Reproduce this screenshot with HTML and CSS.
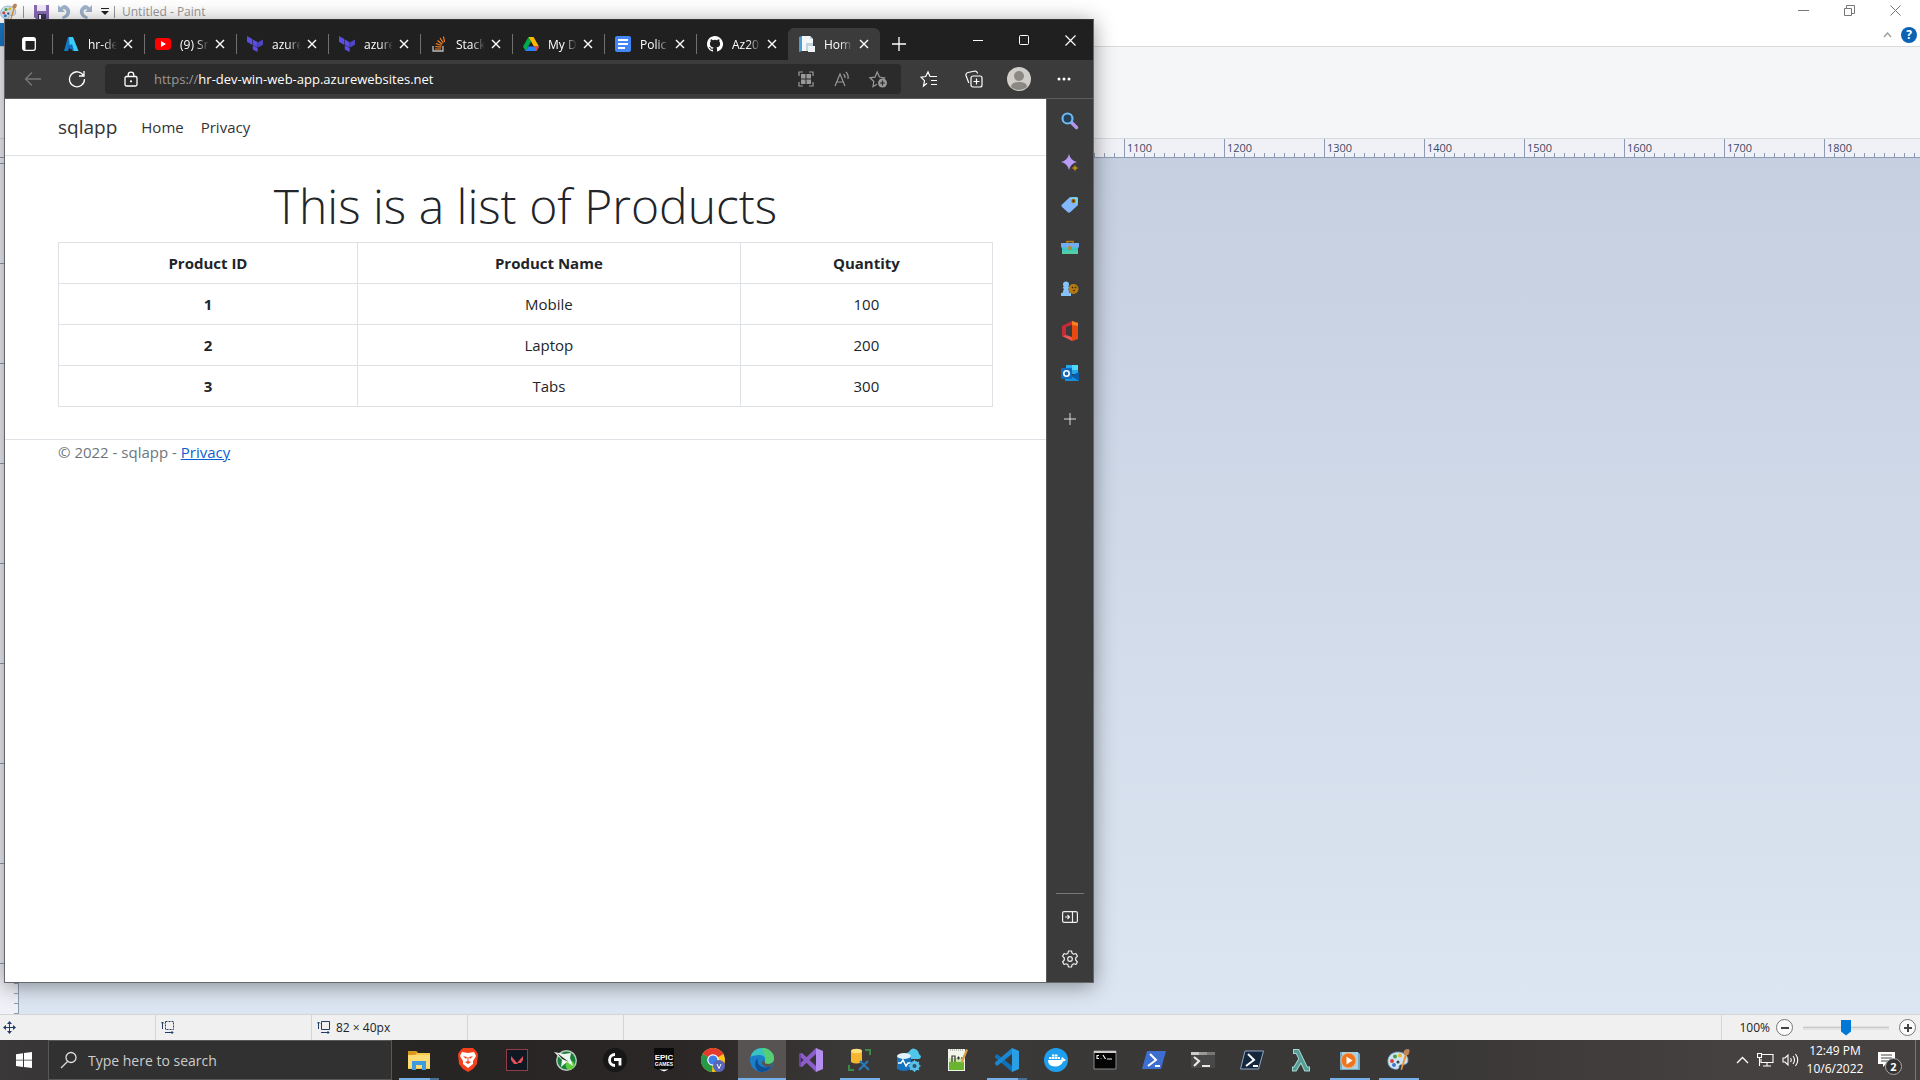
FILE: index.html
```html
<!DOCTYPE html>
<html lang="en">
<head>
<meta charset="utf-8">
<title>Desktop</title>
<link rel="stylesheet" href="styles.css">
</head>
<body>
<svg class="defs" aria-hidden="true">
  <symbol id="x" viewBox="0 0 10 10"><path d="M1 1l8 8M9 1L1 9" stroke="currentColor" stroke-width="1.4" fill="none"/></symbol>
  <symbol id="terraform" viewBox="0 0 18 18"><path d="M0 0l6 3.500v6.500L0 6.500z" fill="#5c4ee5"/><path d="M6.500 3.800l5.500 3.200v6l-5.500-3.200zM6.500 10.500l5.500 3V18l-5.500-2.700z" fill="#5c4ee5"/><path d="M18 3.800l-5.500 3.200v6l5.500-3.200z" fill="#4f46c4"/></symbol>
  <symbol id="palette" viewBox="0 0 24 24"><path d="M11 4C4 4 0 9 1 15c1 5 6 7 10 6 2-1 0-3 2-4s8 1 8-5c0-5-5-8-10-8z" fill="#cfe4f2" stroke="#6d9cba" stroke-width=".8"/><circle cx="5" cy="13" r="2" fill="#d9453b"/><circle cx="8" cy="8.500" r="2" fill="#46a04a"/><circle cx="13" cy="7.500" r="2" fill="#e9b52d"/><circle cx="7" cy="17" r="2" fill="#3f78d1"/><circle cx="11" cy="14" r="1.500" fill="#36454f"/><path d="M20 7l-5 15-1.500-.5L18 6z" fill="#e8923a"/><path d="M17 7c-1-3 0-6 4-6 2 0 2 3 0 6z" fill="#c08457"/></symbol>
</svg>

<section class="paint">
  <header class="paint-title">
    <div class="quick">
      <svg width="18" height="18"><use href="#palette"/></svg>
      <i class="bar"></i>
      <svg width="15" height="15" viewBox="0 0 15 15"><path d="M0 1h15v14H2l-2-2z" fill="#8a6bb5"/><path d="M3 1h9v6H3z" fill="#f0ecf8"/><path d="M4 10h8v5H4z" fill="#3e3357"/><path d="M5 11h2v4H5z" fill="#fff"/></svg>
      <svg width="14" height="16" viewBox="0 0 14 16"><path d="M1 1v7h7L5.500 5.500C9 4 11 8 8 11l-3 2 1 2c6-1 9-7 6-11S6 0 3.500 3.500z" fill="#9fb3cc"/></svg>
      <svg width="14" height="16" viewBox="0 0 14 16"><path d="M13 1v7H6l2.500-2.500C5 4 3 8 6 11l3 2-1 2C2 14-1 8 2 4s6-4 8.500-.5z" fill="#9fb3cc"/></svg>
      <svg width="8" height="8" viewBox="0 0 8 8"><path d="M0 0h8v1H0zM0 3h8L4 7z" fill="#222"/></svg>
      <i class="bar"></i>
      <span>Untitled - Paint</span>
    </div>
    <div class="paint-buttons">
      <button aria-label="Minimize"><svg width="11" height="11"><path d="M0 5.500h11" stroke="#777"/></svg></button>
      <button aria-label="Restore"><svg width="11" height="11" fill="none" stroke="#777"><path d="M.5 3.500h7v7h-7zM2.500 3V.500h8v8H8"/></svg></button>
      <button aria-label="Close"><svg width="11" height="11"><path d="M.5.500l10 10M10.500.500l-10 10" stroke="#777"/></svg></button>
    </div>
  </header>
  <div class="paint-tabs">
    <button class="file" aria-label="File"></button>
    <div class="help">
      <svg width="9" height="6" viewBox="0 0 9 6"><path d="M1 5l3.500-4L8 5" fill="none" stroke="#999" stroke-width="1.300"/></svg>
      <button class="question">?</button>
    </div>
  </div>
  <div class="ribbon"></div>
  <div class="ruler-x"><div class="marks"><span class="first">1100</span><span>1200</span><span>1300</span><span>1400</span><span>1500</span><span>1600</span><span>1700</span><span>1800</span></div></div>
  <div class="work"><div class="ruler-y"><i></i></div></div>
  <footer class="status">
    <div class="cell"><svg width="13" height="13" viewBox="0 0 13 13" fill="#233f68"><path d="M6 1h1v11H6zM1 6h11v1H1zM6.500 0L9 3H4zM6.500 13L4 10h5zM0 6.500L3 4v5zM13 6.500L10 9V4z"/></svg></div>
    <div class="cell"><svg width="14" height="13" viewBox="0 0 14 13" fill="none" stroke="#233f68"><path d="M1.500 1v7M0 2.500L1.500 1 3 2.500M4 11.500h8M10.500 10l1.500 1.500-1.500 1.500"/><path d="M4.500.500h8v8h-8z" stroke-dasharray="2 1"/></svg></div>
    <div class="cell"><svg width="14" height="13" viewBox="0 0 14 13" fill="none" stroke="#233f68"><path d="M1.500 1v7M0 2.500L1.500 1 3 2.500M4 11.500h8M10.500 10l1.500 1.500-1.500 1.500M4.500.500h8v8h-8z"/></svg><span>82 × 40px</span></div>
    <div class="cell"></div>
    <div class="cell rest"></div>
    <div class="zoom">
      <label for="zoom">100%</label>
      <button class="round" aria-label="Zoom out"><svg width="10" height="10"><path d="M1 5h8" stroke="#444" stroke-width="2"/></svg></button>
      <input id="zoom" type="range" min="0" max="100" value="50">
      <button class="round" aria-label="Zoom in"><svg width="10" height="10"><path d="M1 5h8M5 1v8" stroke="#444" stroke-width="2"/></svg></button>
    </div>
  </footer>
</section>

<section class="browser">
  <header class="tabstrip">
    <button class="tabmenu" aria-label="Tab actions"><svg width="14" height="14" viewBox="0 0 14 14"><rect x=".7" y=".7" width="12.600" height="12.600" rx="2" fill="none" stroke="#fff" stroke-width="1.300"/><path d="M1 1h12v3H1zM1 4h2.500v9H1z" fill="#fff"/></svg></button>
    <div class="tab"><svg width="16" height="16" viewBox="0 0 16 16"><path d="M5 1h5L5 15H1z" fill="#1479c4"/><path d="M6 1h4l5.500 14H10L6.500 8z" fill="#3ccbf4"/><path d="M4 11l5-3 2 7z" fill="#0f6cbd"/></svg><span>hr-de</span><button aria-label="Close tab"><svg width="10" height="10"><use href="#x"/></svg></button></div>
    <div class="tab"><svg width="16" height="12" viewBox="0 0 16 12"><rect width="16" height="12" rx="3" fill="#f00"/><path d="M6 3l5 3-5 3z" fill="#fff"/></svg><span>(9) Sn</span><button aria-label="Close tab"><svg width="10" height="10"><use href="#x"/></svg></button></div>
    <div class="tab"><svg width="16" height="16"><use href="#terraform"/></svg><span>azure</span><button aria-label="Close tab"><svg width="10" height="10"><use href="#x"/></svg></button></div>
    <div class="tab"><svg width="16" height="16"><use href="#terraform"/></svg><span>azure</span><button aria-label="Close tab"><svg width="10" height="10"><use href="#x"/></svg></button></div>
    <div class="tab"><svg width="16" height="16" viewBox="0 0 16 16" fill="none"><path d="M2 10v5h10v-5" stroke="#bcbbbb" stroke-width="1.300"/><path d="M4 13h6M4.200 10.500l6 .7M4.800 7.500l5.700 2M6.500 4.500l4.700 3.700M9 2l3.300 5M12.500.500l1 5.500" stroke="#f48024" stroke-width="1.200"/></svg><span>Stack</span><button aria-label="Close tab"><svg width="10" height="10"><use href="#x"/></svg></button></div>
    <div class="tab"><svg width="16" height="16" viewBox="0 0 16 16"><path d="M5.500 1L0 10.500 2.500 15 8 5.500z" fill="#00ac47"/><path d="M5.500 1h5l5.500 9.500h-5z" fill="#ffba00"/><path d="M5.200 10.500H16L13.500 15h-11z" fill="#2684fc"/><path d="M11 10.500h5L13.500 15z" fill="#ea4335"/></svg><span>My D</span><button aria-label="Close tab"><svg width="10" height="10"><use href="#x"/></svg></button></div>
    <div class="tab"><svg width="16" height="16" viewBox="0 0 16 16"><rect width="16" height="16" rx="2" fill="#4285f4"/><path d="M3 4h10M3 8h10M3 12h7" stroke="#fff" stroke-width="1.800"/></svg><span>Polic</span><button aria-label="Close tab"><svg width="10" height="10"><use href="#x"/></svg></button></div>
    <div class="tab"><svg width="16" height="16" viewBox="0 0 16 16" fill="#fff"><path d="M8 0C3.580 0 0 3.580 0 8c0 3.540 2.290 6.530 5.470 7.590.4.070.55-.17.55-.38 0-.19-.01-.82-.01-1.490-2.010.37-2.530-.49-2.690-.94-.09-.23-.48-.94-.82-1.130-.28-.15-.68-.52-.01-.53.63-.01 1.080.58 1.230.82.72 1.210 1.870.87 2.330.66.07-.52.28-.87.51-1.070-1.780-.2-3.640-.89-3.640-3.950 0-.87.31-1.590.82-2.150-.08-.2-.36-1.020.08-2.120 0 0 .67-.21 2.200.82a7.600 7.600 0 014 0c1.530-1.040 2.200-.82 2.200-.82.44 1.100.16 1.920.08 2.120.51.56.82 1.270.82 2.150 0 3.070-1.870 3.750-3.650 3.950.29.25.54.73.54 1.480 0 1.070-.01 1.930-.01 2.200 0 .21.15.46.55.38A8 8 0 008 0z"/></svg><span>Az20</span><button aria-label="Close tab"><svg width="10" height="10"><use href="#x"/></svg></button></div>
    <div class="tab active"><svg width="16" height="16" viewBox="0 0 16 16"><path d="M0 1l3-1v15l-3 1z" fill="#4a9fd4"/><path d="M3 0h8l3 3v12H3z" fill="#f4f8fb"/><path d="M11 0l3 3h-3zM7 7h7v8H7z" fill="#c3d3df"/><path d="M9 10h7v6H9z" fill="#eef2f5"/></svg><span>Hom</span><button aria-label="Close tab"><svg width="10" height="10"><use href="#x"/></svg></button></div>
    <button class="newtab" aria-label="New tab"><svg width="14" height="14"><path d="M7 0v14M0 7h14" stroke="#fff" stroke-width="1.300"/></svg></button>
    <div class="winbuttons">
      <button aria-label="Minimize"><svg width="10" height="10"><path d="M0 5.500h10" stroke="#fff"/></svg></button>
      <button aria-label="Maximize"><svg width="10" height="10"><rect x=".5" y=".5" width="9" height="9" rx="1" fill="none" stroke="#fff"/></svg></button>
      <button aria-label="Close"><svg width="11" height="11"><path d="M.5.500l10 10M10.500.500l-10 10" stroke="#fff" stroke-width="1.200"/></svg></button>
    </div>
  </header>

  <div class="toolbar">
    <button class="nav" aria-label="Back"><svg width="18" height="16" viewBox="0 0 18 16"><path d="M17 8H1.500M8 1.500L1.500 8 8 14.500" fill="none" stroke="#777" stroke-width="1.300"/></svg></button>
    <button class="nav" aria-label="Refresh"><svg width="18" height="18" viewBox="0 0 18 18"><path d="M15.500 5.500A7.500 7.500 0 1 0 16.500 9M16 1v5h-5" fill="none" stroke="#fff" stroke-width="1.300"/></svg></button>
    <div class="address">
      <svg width="14" height="16" viewBox="0 0 14 16"><rect x="1" y="5.500" width="12" height="9.500" rx="1.500" fill="none" stroke="#fff" stroke-width="1.300"/><path d="M4.200 5.500V4a2.800 2.800 0 0 1 5.600 0v1.500" fill="none" stroke="#fff" stroke-width="1.300"/><circle cx="7" cy="10.300" r="1.100" fill="#fff"/></svg>
      <span class="url"><i>https://</i>hr-dev-win-web-app.azurewebsites.net</span>
      <button aria-label="QR code"><svg width="16" height="16" viewBox="0 0 16 16"><path d="M1 5V1h4M11 1h4v4M15 11v4h-4M5 15H1v-4" fill="none" stroke="#999" stroke-width="1.200"/><path d="M3 3h4.500v4.500H3zM8.500 3H13v4.500H8.500zM3 8.500h4.500V13H3zM8.500 8.500H13V13H8.500z" fill="#999"/></svg></button>
      <button aria-label="Read aloud"><svg width="16" height="16" viewBox="0 0 16 16" fill="none" stroke="#999" stroke-width="1.200"><path d="M1 15L6 3l5 12M3 11h6.500M9.500 3a5 5 0 0 1 1.500 4M12 1a8 8 0 0 1 2 7"/></svg></button>
      <button aria-label="Add favorite"><svg width="18" height="18" viewBox="0 0 18 18"><path d="M8 14.200L4 16.500l.8-5L1 7.800l5-.7L8.200 2l2.300 5 5 .8-1 1" fill="none" stroke="#999" stroke-width="1.200"/><circle cx="13.500" cy="13" r="4.500" fill="#999"/><path d="M13.500 10.500v5M11 13h5" stroke="#2b2b2b" stroke-width="1.200"/></svg></button>
    </div>
    <div class="tools">
      <button aria-label="Favorites"><svg width="18" height="18" viewBox="0 0 18 18" fill="none" stroke="#fff" stroke-width="1.200"><path d="M7 13.200L3.500 16l1-5.300L1 7.200l4.700-.7L8 2l2 4.500h7M11 10.500h6M11 14.500h6"/></svg></button>
      <button aria-label="Collections"><svg width="18" height="18" viewBox="0 0 18 18" fill="none" stroke="#fff" stroke-width="1.200"><rect x="6" y="6" width="11" height="11" rx="2"/><path d="M11.500 8.500v6M8.500 11.500h6M3.800 13L1 5.500Q.5 3 3 2.500L10 1q2 0 2.500 2.500"/></svg></button>
      <button aria-label="Profile"><svg width="24" height="24" viewBox="0 0 24 24"><circle cx="12" cy="12" r="12" fill="#d0cecb"/><circle cx="12" cy="9" r="5" fill="#8b8783"/><path d="M4 20q0-5 8-5t8 5a12 12 0 0 1-16 0z" fill="#8b8783"/></svg></button>
      <button aria-label="More"><svg width="14" height="4" fill="#fff"><circle cx="2" cy="2" r="1.500"/><circle cx="7" cy="2" r="1.500"/><circle cx="12" cy="2" r="1.500"/></svg></button>
    </div>
  </div>

  <div class="body">
    <div class="page">
      <nav class="navbar">
        <a class="brand" href="#">sqlapp</a>
        <a href="#">Home</a>
        <a href="#">Privacy</a>
      </nav>
      <main>
        <h1>This is a list of Products</h1>
        <table>
          <colgroup><col class="c1"><col class="c2"><col class="c3"></colgroup>
          <thead><tr><th>Product ID</th><th>Product Name</th><th>Quantity</th></tr></thead>
          <tbody>
            <tr><th>1</th><td>Mobile</td><td>100</td></tr>
            <tr><th>2</th><td>Laptop</td><td>200</td></tr>
            <tr><th>3</th><td>Tabs</td><td>300</td></tr>
          </tbody>
        </table>
      </main>
      <footer class="page-foot">© 2022 - sqlapp - <a href="#">Privacy</a></footer>
    </div>
    <aside class="side">
      <button aria-label="Search"><svg width="18" height="18" viewBox="0 0 18 18"><path d="M10.500 10.500l5 5" stroke="#b596ee" stroke-width="3.500" stroke-linecap="round"/><circle cx="6.500" cy="6.500" r="5" fill="#23405c" stroke="#6db9f2" stroke-width="2.200"/></svg></button>
      <button aria-label="Discover"><svg width="18" height="18" viewBox="0 0 18 18"><path d="M8 0q1.500 6.500 8 8-6.500 1.500-8 8-1.500-6.500-8-8 6.500-1.500 8-8z" fill="#b79bf5"/><path d="M14 10.500q.5 3 3.500 3.500-3 .5-3.500 3.500-.5-3-3.500-3.500 3-.5 3.500-3.500z" fill="#c38a12"/></svg></button>
      <button aria-label="Shopping"><svg width="18" height="18" viewBox="0 0 18 18"><path d="M1 8.500L8.500 1.500 15 1q2 0 2 2l-.5 6.500L9.500 16q-1.500 1.300-3 0L1 11q-1.200-1.300 0-2.500z" fill="#82b8fa"/><path d="M8.500 1.500L15 1q2 0 2 2l-.5 6.500z" fill="#77d5f0"/><circle cx="12.500" cy="5" r="2.200" fill="#a86e05"/><circle cx="12.500" cy="5" r="1" fill="#2c2c2c"/></svg></button>
      <button aria-label="Tools"><svg width="18" height="16" viewBox="0 0 18 16"><path d="M6 5V2.500h6V5" fill="none" stroke="#b47a12" stroke-width="1.600"/><path d="M1 6h16v8.500H1z" fill="#3bc6c4"/><path d="M0 4h18v4.500H0z" fill="#74acf0"/><path d="M1 12h16v3H1z" fill="#54cda5"/><circle cx="9" cy="9" r="2" fill="#b98d27"/></svg></button>
      <button aria-label="Games"><svg width="18" height="16" viewBox="0 0 18 16"><circle cx="12.500" cy="8" r="5" fill="#b67b13"/><path d="M11 6h1v1h-1zM14 6h1v1h-1zM12.500 9h1v1h-1z" fill="#3a2500" stroke="#3a2500" stroke-width=".5"/><circle cx="5" cy="3.500" r="3" fill="#86c3fa"/><path d="M2 6h6v1.500H7L8.500 12H10v3H0v-3h1.500L3 7.500H2z" fill="#86c3fa"/></svg></button>
      <button aria-label="Office"><svg width="18" height="20" viewBox="0 0 18 20"><path d="M11 0l6 2v16l-6 2z" fill="#e64a10"/><path d="M11 0v4L5 6v8l-4 1V5z" fill="#c92a35"/><path d="M1 15l4-1 6 2v4z" fill="#ef5350"/><path d="M11 0l6 2v3l-6-1z" fill="#f5811f"/></svg></button>
      <button aria-label="Outlook"><svg width="18" height="18" viewBox="0 0 18 18"><path d="M5 1h12v9H5z" fill="#28a8ea"/><path d="M11 1h6v5h-6z" fill="#50d9ff"/><path d="M4 8l7 4 7-4v9H4z" fill="#1490df"/><path d="M18 8v9l-8-5z" fill="#0a5ca8"/><rect y="4" width="11" height="11" rx="1" fill="#0f6cbd"/><circle cx="5.500" cy="9.500" r="2.700" fill="none" stroke="#fff" stroke-width="1.600"/></svg></button>
      <button class="plus" aria-label="Add"><svg width="12" height="12"><path d="M6 0v12M0 6h12" stroke="#ddd"/></svg></button>
      <hr>
      <button aria-label="Hide sidebar"><svg width="16" height="12" viewBox="0 0 16 12"><rect x=".6" y=".6" width="14.800" height="10.800" rx="1.500" fill="none" stroke="#eee" stroke-width="1.200"/><path d="M10.500 1v10M3 6h4.500M5.500 4l2 2-2 2" fill="none" stroke="#eee" stroke-width="1.200"/></svg></button>
      <button aria-label="Settings"><svg width="18" height="18" viewBox="0 0 18 18" fill="none" stroke="#eee" stroke-width="1.200"><path d="M7.500 1h3l.6 2.300 1.500.9 2.300-.7 1.500 2.600L14.700 8v2l1.700 1.900-1.500 2.600-2.300-.7-1.500.9-.6 2.300h-3l-.6-2.300-1.500-.9-2.300.7-1.500-2.600L3.300 10V8L1.600 6.100l1.500-2.600 2.300.7 1.500-.9z" stroke-linejoin="round"/><circle cx="9" cy="9" r="2.300"/></svg></button>
    </aside>
  </div>
</section>

<footer class="taskbar">
  <button class="start" aria-label="Start"><svg width="16" height="16" viewBox="0 0 16 16" fill="#fff"><path d="M0 2.200l7-1v6.500H0zM8 1.100L16 0v7.700H8zM0 8.500h7V15l-7-1zM8 8.500h8V16l-8-1.100z"/></svg></button>
  <div class="search"><svg width="18" height="18" viewBox="0 0 18 18" fill="none" stroke="#ddd" stroke-width="1.300"><circle cx="11" cy="6.500" r="5"/><path d="M7.500 10.500L1 17"/></svg><input type="text" aria-label="Search" placeholder="Type here to search"></div>
  <div class="apps">
    <button class="run more" aria-label="Explorer"><svg width="24" height="24" viewBox="0 0 24 24"><path d="M1 3h8l2 2h12v16H1z" fill="#f9c846"/><path d="M1 3h8l1 2-2 2H1z" fill="#d8981c"/><path d="M1 7h22v13H1z" fill="#fddb75"/><path d="M5 13h14v9h-4v-5H9v5H5z" fill="#3e9be0"/></svg></button>
    <button aria-label="Brave"><svg width="24" height="24" viewBox="0 0 24 24"><path d="M7 0h10l3 3 2 3-1 10-4 5-5 3-5-3-4-5L2 6l2-3z" fill="#f5401c"/><path d="M6 4l6 1 6-1 2 4-3 5v3l-5 4-5-4v-3L4 8z" fill="#fff"/><path d="M7 8l4 1-1 2zM17 8l-4 1 1 2zM11.500 9h1v5h-1zM9 14l3-1 3 1-3 2z" fill="#f5401c"/></svg></button>
    <button aria-label="Valorant"><svg width="24" height="24" viewBox="0 0 24 24"><rect x="1.500" y="1.500" width="21" height="21" fill="#101822" stroke="#963c48"/><path d="M6 8l7 8h-4l-3-4zM18 8v4l-2 3h-4z" fill="#e5505c"/></svg></button>
    <button aria-label="Afterburner"><svg width="24" height="24" viewBox="0 0 24 24"><circle cx="12.500" cy="12.500" r="10.500" fill="#b9c7bb"/><circle cx="12.500" cy="12.500" r="9" fill="#178038"/><circle cx="16" cy="17" r="4.500" fill="#5fce3e"/><path d="M0 4l10 2 7-1-1 5 3 8-6-4-6 5 1-7z" fill="#eef5ee"/><path d="M3 5l12 9-7-3z" fill="#2a3c30"/></svg></button>
    <button aria-label="Logitech G Hub"><svg width="24" height="24" viewBox="0 0 24 24"><circle cx="12" cy="12" r="12" fill="#171717"/><path d="M12 6.500a5.500 5.500 0 0 0 0 11M11 11.500h6v6" fill="none" stroke="#fff" stroke-width="2.800"/></svg></button>
    <button class="epic" aria-label="Epic Games"><svg width="22" height="24" viewBox="0 0 22 24"><path d="M1 0h20v20l-10 4-10-4z" fill="#0b0b0b"/><path d="M6 21.500h10l-5 2z" fill="#fff"/><text x="11" y="12" class="e1">EPIC</text><text x="11" y="18" class="e2">GAMES</text></svg></button>
    <button aria-label="Chrome"><svg width="24" height="24" viewBox="0 0 24 24"><circle cx="12" cy="12" r="12" fill="#f9c51d"/><path d="M12 12L1.600 6A12 12 0 0 1 22.400 6z" fill="#e33b2e"/><path d="M12 12l-1 12A12 12 0 0 1 1.600 6z" fill="#279847"/><circle cx="12" cy="12" r="5.800" fill="#fff"/><circle cx="12" cy="12" r="4.600" fill="#3f7de8"/><circle cx="18" cy="18" r="6" fill="#5965b8"/><path d="M16 16l2 4.500 2-4.500" stroke="#fff" fill="none"/></svg></button>
    <button class="current" aria-label="Edge"><svg width="24" height="24" viewBox="0 0 24 24"><circle cx="12" cy="12" r="12" fill="#1a7fc9"/><path d="M.5 9C2 3 7 0 12 0c7 0 12 5 12 10 0 4-3 6-6 6s-4-1-3-3c1-4-2-6-6-6-4 0-7 1-8.500 2z" fill="#39c3c0"/><path d="M12 0c7 0 12 5 12 10 0 4-3 6-6 6s-4-1-3-3c2-4-1-8-3-13z" fill="#56cf72"/><path d="M8 10c-2 7 4 12 14 8-3 5-9 7-13 5.500C4 20 4 13 8 10z" fill="#114f94"/><path d="M15 13c-1 2 0 3 3 3 3 0 5-1 6-3l-2 5c-5 2-11 0-10-4q1-2 3-1z" fill="#59534f"/></svg></button>
    <button aria-label="Visual Studio"><svg width="24" height="24" viewBox="0 0 24 24"><path d="M17 0l7 3v18l-7 3z" fill="#b58cf0"/><path d="M0 6l3-1 14 13v6L2 9.500v5L17 0v6L3 19l-3-1z" fill="#8c5cc9"/><path d="M0 6l2 1v10l-2 1z" fill="#6f3fa8"/></svg></button>
    <button class="run" aria-label="SQL Server Management Studio"><svg width="24" height="24" viewBox="0 0 24 24"><path d="M3 3v11q5 3 11 0V3z" fill="#f5b62e"/><ellipse cx="8.500" cy="3" rx="5.500" ry="2.300" fill="#ffe17c"/><path d="M17 2h5v5M1 17v5h5" fill="none" stroke="#3c8a48" stroke-width="2"/><path d="M12 13l9 9M20 13l-9 9" stroke="#2879b8" stroke-width="2.300"/></svg></button>
    <button aria-label="Azure Data Studio"><svg width="24" height="24" viewBox="0 0 24 24"><path d="M9 10a4 4 0 0 1 3-6q3-6 8-2 2 2 2 4 4 3 0 5H12z" fill="#50c7e8"/><path d="M0 8v13q7 4 14 0V8z" fill="#1673bd"/><ellipse cx="7" cy="8" rx="7" ry="3" fill="#e1f2fa"/><path d="M1 15h3l2-3 3 6 2-3h2" fill="none" stroke="#fff" stroke-width="1.400"/><circle cx="17.500" cy="18" r="3.500" fill="none" stroke="#59bde5" stroke-width="3"/><path d="M17.500 12v12M11.500 18h12M13 14l9 8M22 14l-9 8" stroke="#59bde5" stroke-width="1.300"/><circle cx="17.500" cy="18" r="2" fill="#2a5674"/></svg></button>
    <button aria-label="Notepad++"><svg width="24" height="24" viewBox="0 0 24 24"><path d="M2 1h17v22H2z" fill="#f2f5ea"/><path d="M3 14h15v8H3z" fill="#69b52f"/><path d="M3 10h15v4H3z" fill="#c7e69f"/><path d="M6 14V8h3v6M11 10h3M12.500 8.500v3M15 10h2" fill="none" stroke="#333" stroke-width="1.200"/><path d="M4 2h13" stroke="#888" stroke-dasharray="1 1"/><path d="M20 1l2 1-5 12-2 2v-3z" fill="#d9a24a"/></svg></button>
    <button class="run more" aria-label="Visual Studio Code"><svg width="24" height="24" viewBox="0 0 24 24"><path d="M17 0l7 3v18l-7 3z" fill="#2a9fe6"/><path d="M0 8l2-2 15 12v6L0 9.500z" fill="#0f72b8"/><path d="M0 16l2 2L17 6V0L0 14.500z" fill="#1b87d1"/></svg></button>
    <button aria-label="Docker"><svg width="24" height="24" viewBox="0 0 24 24"><circle cx="12" cy="12" r="12" fill="#1fa0ee"/><path d="M4 12h13l1-3q2 1 2 2l2 .5q-1 2-3 2-2 5-8 5-7 0-7-6.500zM5 9h2.500v2H5zM8 9h2.500v2H8zM11 9h2.500v2H11zM14 9h2v2h-2zM8 6.500h2.500v2H8zM11 6.500h2.500v2H11z" fill="#fff"/></svg></button>
    <button aria-label="Command Prompt"><svg width="24" height="20" viewBox="0 0 24 20"><path d="M1 1h22v18H1z" fill="#050505" stroke="#8a8a8a"/><path d="M1 1h22v2H1z" fill="#ccc"/><path d="M6 5.500H4v3h2M8 5.500v.1M8 8v.5M10 5l2.500 4M14 9h5" fill="none" stroke="#eee" stroke-width="1.200"/></svg></button>
    <button aria-label="PowerShell"><svg width="24" height="20" viewBox="0 0 24 20"><path d="M5 1h19l-5 18H0z" fill="#3d6fd0"/><path d="M8 4l6 6-8 6M13 16h5" fill="none" stroke="#fff" stroke-width="2"/></svg></button>
    <button aria-label="Terminal"><svg width="24" height="20" viewBox="0 0 24 20"><path d="M0 2h24v16H0z" fill="#484848"/><path d="M0 2h8v3H0z" fill="#ccc"/><path d="M8 2h8v3H8z" fill="#999"/><path d="M16 2h8v3h-8z" fill="#777"/><path d="M3 7l5 4-5 5M11 16h8" fill="none" stroke="#e8e8e8" stroke-width="2.200"/></svg></button>
    <button aria-label="PowerShell 7"><svg width="24" height="20" viewBox="0 0 24 20"><path d="M5 1h18.500l-5 18H.5z" fill="#15273d" stroke="#8fa9c4"/><path d="M8 4l6 6-8 6M13 16h5" fill="none" stroke="#fff" stroke-width="2"/></svg></button>
    <button aria-label="Cmder"><svg width="24" height="24" viewBox="0 0 24 24"><path d="M4 3.500h4.500L17 21h4M12 11L6 21H3" fill="none" stroke="#a4d8d0" stroke-width="5"/><path d="M5 3.500h3.500L17 21h3M12 11L6 21H4" fill="none" stroke="#549c95" stroke-width="3"/></svg></button>
    <button class="run" aria-label="Media Player"><svg width="24" height="24" viewBox="0 0 24 24"><path d="M2 4h18l2 2v16H2z" fill="#6fa9c4"/><path d="M4 4h16v17H4z" fill="#a7d3e6"/><circle cx="10.500" cy="12.500" r="7.500" fill="#ee7420" stroke="#f7b27c"/><path d="M8.500 8.500l6 4-6 4z" fill="#fff"/></svg></button>
    <button class="run" aria-label="Paint"><svg width="24" height="24"><use href="#palette"/></svg></button>
  </div>
  <div class="tray">
    <button aria-label="Hidden icons"><svg width="13" height="8" viewBox="0 0 13 8"><path d="M1 7l5.500-5.500L12 7" fill="none" stroke="#fff" stroke-width="1.300"/></svg></button>
    <svg width="17" height="14" viewBox="0 0 17 14" fill="none" stroke="#fff" stroke-width="1.100"><path d="M5 1.500h11v8H4V6M10 9.500v3M6 13h8M.5.500h4v4h-4zM2.500 4.500V13"/></svg>
    <svg width="17" height="14" viewBox="0 0 17 14" fill="none" stroke="#fff" stroke-width="1.100"><path d="M1 5h2l3-3v10L3 9H1zM8.500 5q1.500 2 0 4M11 3q3 4 0 8M13.500 1q4.500 6 0 12"/></svg>
    <div class="clock"><span>12:49 PM</span><span>10/6/2022</span></div>
    <button class="notes" aria-label="Notifications"><svg width="17" height="16" viewBox="0 0 17 16"><path d="M0 0h17v12H8l-3 3v-3H0z" fill="#fff"/><path d="M3 3h11M3 6h11M3 9h7" stroke="#444"/></svg><b>2</b></button>
    <i class="peek"></i>
  </div>
</footer>
</body>
</html>
```
FILE: styles.css
```css
* { box-sizing: border-box; }
body {
  margin: 0;
  height: 100vh;
  display: flex;
  flex-direction: column;
  position: relative;
  overflow: hidden;
  font-family: "Open Sans", "Noto Sans", sans-serif;
  font-size: 12px;
}
button { border: 0; padding: 0; background: none; color: inherit; font: inherit; display: flex; align-items: center; justify-content: center; }
svg { display: block; flex: none; }
.defs { position: absolute; width: 0; height: 0; }

/* Paint */
.paint { flex: 1; display: flex; flex-direction: column; min-height: 0; background: #fff; }
.paint-title { height: 23px; display: flex; justify-content: space-between; color: #999; }
.quick { display: flex; align-items: center; gap: 8px; }
.quick .bar { width: 1px; height: 12px; background: #999; margin: 0 2px 0 -3px; }
.quick span { margin-left: -3px; }
.paint-buttons { display: flex; padding-right: 2px; }
.paint-buttons button { width: 46px; height: 21px; }
.paint-tabs { height: 24px; display: flex; justify-content: space-between; border-bottom: 1px solid #d8d9db; }
.file { width: 56px; background: #1979ca; }
.help { display: flex; align-items: center; gap: 9px; padding-right: 3px; }
.question { width: 16px; height: 16px; border-radius: 50%; background: #0b62b4; color: #fff; font-weight: 700; }
.ribbon { height: 92px; background: #f5f6f8; border-bottom: 1px solid #d8d9db; }
.ruler-x { height: 19px; padding-left: 24px; background: #f0f1f7; border-bottom: 1px solid #8e9cb3; overflow: hidden; }
.marks {
  height: 100%;
  display: grid;
  grid-template-columns: repeat(19, 100px);
  background:
    repeating-linear-gradient(90deg, #8e9cb3 0 1px, transparent 1px 100px),
    repeating-linear-gradient(90deg, #8e9cb3 0 1px, transparent 1px 10px) 0 100% / 100% 4px no-repeat;
}
.marks span { padding-left: 3px; font-size: 11px; line-height: 17px; color: #3c4a68; }
.marks .first { grid-column-start: 12; }
.work { flex: 1; min-height: 0; display: flex; background: linear-gradient(#c5cfe0, #dce6f2); }
.ruler-y {
  width: 19px;
  padding-top: 5px;
  border-right: 1px solid #8e9cb3;
  background: #f0f1f7;
}
.ruler-y i {
  display: block;
  height: 100%;
  background:
    repeating-linear-gradient(#8e9cb3 0 1px, transparent 1px 100px),
    repeating-linear-gradient(#8e9cb3 0 1px, transparent 1px 10px) 100% 0 / 4px 100% no-repeat;
}
.status { height: 26px; display: flex; background: #f0f0f0; border-top: 1px solid #d5d5d5; color: #222; }
.cell { width: 156px; padding-left: 5px; display: flex; align-items: center; gap: 5px; border-right: 1px solid #d5d5d5; }
.cell:first-child { padding-left: 3px; }
.cell.rest { flex: 1; }
.zoom { width: 198px; display: flex; align-items: center; justify-content: flex-end; gap: 6px; padding-right: 4px; }
.round { width: 17px; height: 17px; border: 1px solid #777; border-radius: 50%; background: #fafafa; }
.zoom input { appearance: none; width: 86px; height: 16px; margin: 0 4px; background: linear-gradient(#c8c8c8, #c8c8c8) center / 100% 1px no-repeat, linear-gradient(#e3e3e3, #e3e3e3) center / 100% 4px no-repeat; }
.zoom input::-webkit-slider-thumb { appearance: none; width: 10px; height: 16px; background: #0078d7; clip-path: polygon(0 0, 100% 0, 100% 75%, 50% 100%, 0 75%); }

/* Browser window floating over Paint */
.browser {
  position: absolute;
  left: 4px;
  top: 19px;
  bottom: 97px;
  width: 1090px;
  max-width: 100%;
  display: flex;
  flex-direction: column;
  border: 1px solid #66666a;
  border-top-color: #333;
  background: #3b3b3b;
  color: #fff;
  box-shadow: 0 3px 20px rgba(0, 0, 0, .4);
}
.tabstrip { height: 40px; display: flex; background: #202020; }
.tabmenu { width: 47px; padding-top: 8px; }
.tab {
  width: 92px;
  margin-top: 8px;
  padding-left: 11px;
  display: flex;
  align-items: center;
  position: relative;
  font-size: 12px;
}
.tab::before { content: ""; position: absolute; left: 0; top: 6px; width: 1px; height: 20px; background: #707070; }
.tab.active::before { display: none; }
.tab span { width: 29px; margin: 0 6px 0 9px; overflow: hidden; white-space: nowrap; mask-image: linear-gradient(90deg, #000 55%, transparent); }
.tab > svg { width: 16px; }
.tab.active { background: #3b3b3b; border-radius: 6px 6px 0 0; }
.newtab { width: 37px; padding-top: 8px; }
.winbuttons { margin-left: auto; display: flex; }
.winbuttons button { width: 46px; height: 40px; }
.toolbar { height: 39px; display: flex; align-items: center; padding: 0 7px 0 6px; border-bottom: 1px solid #5c5c5c; }
.nav { width: 44px; height: 30px; }
.address { flex: 1; height: 30px; margin-left: 6px; padding: 0 5px 0 19px; display: flex; align-items: center; background: #2b2b2b; border-radius: 4px; }
.address button { width: 36px; }
.url { flex: 1; margin-left: 16px; font-size: 13px; }
.url i { font-style: normal; color: #999; }
.tools { display: flex; padding-left: 5px; }
.tools button { width: 45px; height: 30px; }
.body { flex: 1; min-height: 0; display: flex; }
.page { flex: 1; background: #fff; color: #212529; font-size: 15px; line-height: 24px; }
.navbar { height: 57px; padding: 0 53px; display: flex; align-items: center; gap: 17px; border-bottom: 1px solid #dee2e6; }
.navbar a { color: #333; text-decoration: none; }
.navbar .brand { font-size: 19px; margin-right: 7px; }
main { padding: 16px 53px 32px; }
h1 { margin: 0 0 3px; font-size: 48px; font-weight: 300; line-height: 67px; text-align: center; }
table { width: 100%; border-collapse: collapse; table-layout: fixed; text-align: center; }
.c1 { width: 32%; }
.c2 { width: 41%; }
th, td { height: 41px; padding: 8px; border: 1px solid #dee2e6; }
.page-foot { padding: 0 53px; border-top: 1px solid #dee2e6; color: #6c757d; }
.page-foot a { color: #0d5fd0; }
.side { width: 47px; display: flex; flex-direction: column; align-items: center; padding: 1px 0 2px; border-left: 1px solid #5c5c5c; }
.side button { width: 46px; height: 42px; }
.side .plus { height: 50px; }
.side hr { width: 28px; margin: auto 0 2px; border: 0; border-top: 1px solid #777; }

/* Taskbar */
.taskbar { height: 40px; display: flex; color: #fff; background: linear-gradient(90deg, #3a3838, #272424 22%, #2a2726 36%, #3b3838 44%, #3a3737 75%, #454140 90%); }
.start { width: 48px; }
.search { width: 344px; padding-left: 11px; display: flex; align-items: center; gap: 10px; background: #313131; border: 1px solid #585858; }
.search input { flex: 1; min-width: 0; padding: 0; border: 0; background: none; color: #fff; font: 14px "Open Sans", "Noto Sans", sans-serif; }
.search input::placeholder { color: #ccc; opacity: 1; }
.apps { display: flex; gap: 1px; padding-left: 3px; }
.apps button { width: 48px; height: 40px; }
.run { background: linear-gradient(#76b0e8, #76b0e8) center bottom / 40px 2px no-repeat; }
.run.more { background: linear-gradient(90deg, #76b0e8 31px, #4a7098 31px) center bottom / 40px 2px no-repeat; }
.current { background: linear-gradient(#76b0e8, #76b0e8) center bottom / 100% 2px no-repeat, #575352; }
.epic text { fill: #fff; font-family: "Liberation Sans", sans-serif; font-weight: 700; text-anchor: middle; }
.e1 { font-size: 8px; }
.e2 { font-size: 5px; }
.tray { margin-left: auto; display: flex; align-items: center; gap: 8px; }
.clock { width: 64px; display: flex; flex-direction: column; align-items: center; font-size: 12px; line-height: 18px; margin: 0 -5px 0 -4px; }
.clock span { white-space: nowrap; }
.notes { width: 32px; height: 40px; margin-right: 5px; position: relative; }
.notes b { position: absolute; right: 0; bottom: 5px; width: 17px; height: 17px; border: 1px solid #aaa; border-radius: 50%; background: #333; font-size: 11px; line-height: 15px; text-align: center; }
.peek { width: 5px; height: 40px; border-left: 1px solid #777; }
```
